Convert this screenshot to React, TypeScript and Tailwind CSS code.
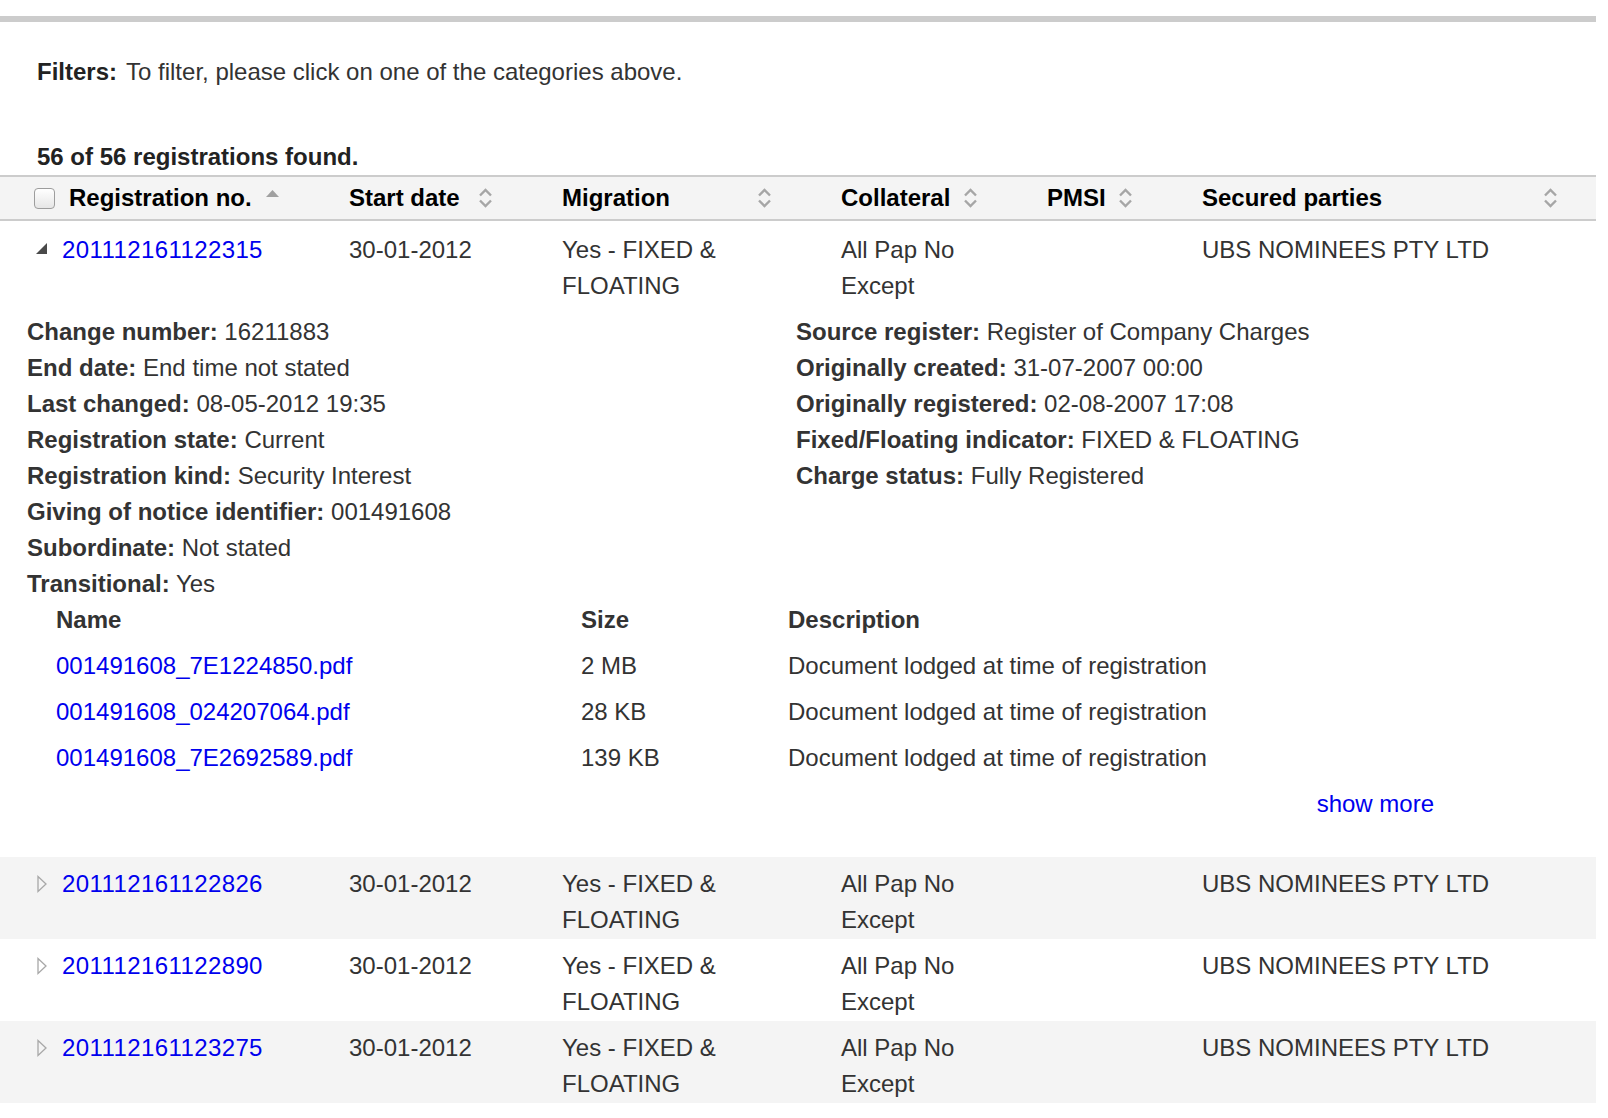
import React from 'react'

const cols = 'grid grid-cols-[335px_213px_279px_206px_155px_408px]'

const SortIcon: React.FC = () => (
  <svg width="15" height="22" viewBox="0 0 15 22" className="shrink-0">
    <path d="M2 8.5 L7.5 3 L13 8.5" fill="none" stroke="#a6a6a6" strokeWidth="2.4" />
    <path d="M2 13.5 L7.5 19 L13 13.5" fill="none" stroke="#a6a6a6" strokeWidth="2.4" />
  </svg>
)

const SortUp: React.FC = () => (
  <svg width="15" height="14" viewBox="0 0 15 14" className="shrink-0 -mt-[6px]">
    <polygon points="1,9 7.5,2 14,9" fill="#a0a0a0" />
  </svg>
)

const Expanded: React.FC = () => (
  <svg width="13" height="13" viewBox="0 0 13 13" className="shrink-0 mt-[10px]">
    <polygon points="1,12 12,1 12,12" fill="#4a4a4a" />
  </svg>
)

const Collapsed: React.FC = () => (
  <svg width="13" height="18" viewBox="0 0 13 18" className="shrink-0 mt-[9px]">
    <polygon points="3,1.5 11,9 3,16.5" fill="none" stroke="#a8a8a8" strokeWidth="1.3" />
  </svg>
)

interface HeadProps {
  label: string
  last?: boolean
}

const Head: React.FC<HeadProps> = ({ label, last }) => (
  <div className={`flex items-center justify-between pl-[14px] ${last ? 'pr-[38px]' : 'pr-[55px]'}`}>
    <span>{label}</span>
    <SortIcon />
  </div>
)

interface RowProps {
  regNo: string
  open?: boolean
  shaded?: boolean
}

const Row: React.FC<RowProps> = ({ regNo, open, shaded }) => (
  <div className={`${cols} ${open ? 'pt-[11px]' : 'h-[82px] pt-[9px]'} ${shaded ? 'bg-[#f4f4f4]' : ''}`}>
    <div className="flex items-start gap-[14px] pl-[35px]">
      {open ? <Expanded /> : <Collapsed />}
      <a href="#" className="tracking-[0.4px] text-[#0000ee]">{regNo}</a>
    </div>
    <div className="pl-[14px] pr-[55px]">30-01-2012</div>
    <div className="pl-[14px] pr-[55px]">Yes - FIXED &amp; FLOATING</div>
    <div className="pl-[14px] pr-[55px]">All Pap No Except</div>
    <div className="pl-[14px] pr-[55px]"></div>
    <div className="pl-[14px] pr-[55px]">UBS NOMINEES PTY LTD</div>
  </div>
)

const Field: React.FC<{ label: string; value: string }> = ({ label, value }) => (
  <div>
    <span className="font-bold">{label}:</span> {value}
  </div>
)

const files = [
  { name: '001491608_7E1224850.pdf', size: '2 MB' },
  { name: '001491608_024207064.pdf', size: '28 KB' },
  { name: '001491608_7E2692589.pdf', size: '139 KB' }
]

const App: React.FC = () => {
  return (
    <div className="w-[1596px] bg-white pb-4 font-['Liberation_Sans',Arial,Helvetica,sans-serif] text-[24px] leading-[36px] text-[#333]">
      <div className="h-4" />
      <div className="h-[6px] bg-[#cccccc]" />

      <div className="mt-[32px] pl-[37px]">
        <span className="font-bold text-[#222]">Filters:</span>
        <span className="ml-[9px]">To filter, please click on one of the categories above.</span>
      </div>

      <div className="mt-[49px] pl-[37px] font-bold text-[#222]">56 of 56 registrations found.</div>

      {/* table header */}
      <div className={`${cols} h-[46px] border-y-2 border-[#cccccc] bg-[#f4f4f4] font-bold text-black`}>
        <div className="flex items-center pl-[34px] pr-[55px]">
          <div className="h-[21px] w-[21px] rounded-[4px] border border-[#9d9d9d] bg-gradient-to-b from-white to-[#e6e6e6]" />
          <span className="ml-[14px] flex-1">Registration no.</span>
          <SortUp />
        </div>
        <Head label="Start date" />
        <Head label="Migration" />
        <Head label="Collateral" />
        <Head label="PMSI" />
        <Head label="Secured parties" last />
      </div>

      {/* expanded row */}
      <div className="pb-[35px]">
        <Row regNo="201112161122315" open />

        <div className="mt-[10px] grid grid-cols-[769px_1fr] pl-[27px]">
          <div>
            <Field label="Change number" value="16211883" />
            <Field label="End date" value="End time not stated" />
            <Field label="Last changed" value="08-05-2012 19:35" />
            <Field label="Registration state" value="Current" />
            <Field label="Registration kind" value="Security Interest" />
            <Field label="Giving of notice identifier" value="001491608" />
            <Field label="Subordinate" value="Not stated" />
            <Field label="Transitional" value="Yes" />
          </div>
          <div>
            <Field label="Source register" value="Register of Company Charges" />
            <Field label="Originally created" value="31-07-2007 00:00" />
            <Field label="Originally registered" value="02-08-2007 17:08" />
            <Field label="Fixed/Floating indicator" value="FIXED & FLOATING" />
            <Field label="Charge status" value="Fully Registered" />
          </div>
        </div>

        <div className="ml-[42px] w-[1406px]">
          <div className="grid h-[46px] grid-cols-[525px_207px_1fr] font-bold">
            <div className="pl-[14px]">Name</div>
            <div className="pl-[14px]">Size</div>
            <div className="pl-[14px]">Description</div>
          </div>
          {files.map(f => (
            <div key={f.name} className="grid h-[46px] grid-cols-[525px_207px_1fr]">
              <div className="pl-[14px]">
                <a href="#" className="text-[#0000ee]">{f.name}</a>
              </div>
              <div className="pl-[14px]">{f.size}</div>
              <div className="pl-[14px]">Document lodged at time of registration</div>
            </div>
          ))}
          <div className="pr-[14px] text-right">
            <a href="#" className="text-[#0000ee]">show more</a>
          </div>
        </div>
      </div>

      <Row regNo="201112161122826" shaded />
      <Row regNo="201112161122890" />
      <Row regNo="201112161123275" shaded />
    </div>
  )
}

export default App
